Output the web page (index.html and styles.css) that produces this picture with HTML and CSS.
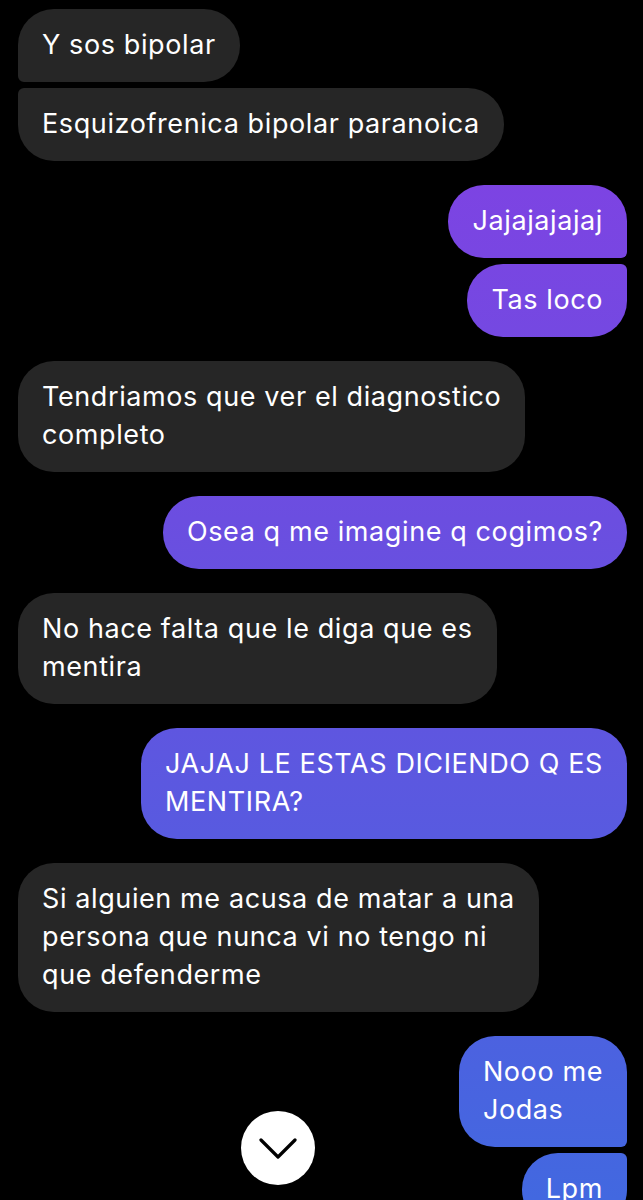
FILE: index.html
```html
<!DOCTYPE html>
<html lang="es">
<head>
  <meta charset="UTF-8">
  <title>Chat</title>
  <link rel="stylesheet" href="styles.css">
</head>
<body>

  <div class="thread">
    <div class="group them">
      <div class="bubble first">Y sos bipolar</div>
      <div class="bubble last">Esquizofrenica bipolar paranoica</div>
    </div>

    <div class="group me">
      <div class="bubble first">Jajajajajaj</div>
      <div class="bubble last">Tas loco</div>
    </div>

    <div class="group them">
      <div class="bubble">Tendriamos que ver el diagnostico<br>completo</div>
    </div>

    <div class="group me">
      <div class="bubble">Osea q me imagine q cogimos?</div>
    </div>

    <div class="group them">
      <div class="bubble">No hace falta que le diga que es<br>mentira</div>
    </div>

    <div class="group me">
      <div class="bubble">JAJAJ LE ESTAS DICIENDO Q ES<br>MENTIRA?</div>
    </div>

    <div class="group them">
      <div class="bubble">Si alguien me acusa de matar a una<br>persona que nunca vi no tengo ni<br>que defenderme</div>
    </div>

    <div class="group me">
      <div class="bubble first">Nooo me<br>Jodas</div>
      <div class="bubble last">Lpm</div>
    </div>
  </div>

  <button class="scroll-down" aria-label="Ir abajo">
    <svg width="38" height="22" viewBox="0 0 38 22">
      <polyline points="2,2 19,19 36,2" fill="none" stroke="#000" stroke-width="3.2" stroke-linecap="round" stroke-linejoin="round"/>
    </svg>
  </button>

</body>
</html>
```

FILE: styles.css
```css
html, body {
  margin: 0;
  padding: 0;
  background: #000;
}

body {
  font-family: Inter, "Noto Sans", sans-serif;
  color: #fff;
  height: 1200px;
  overflow: hidden;
  position: relative;
}

.thread {
  display: flex;
  flex-direction: column;
  gap: 24px;
  padding: 9px 16px 0 18px;
}

.group {
  display: flex;
  flex-direction: column;
  gap: 6px;
}

.group.them {
  align-items: flex-start;
}

.group.me {
  align-items: flex-end;
}

.bubble {
  font-size: 27px;
  line-height: 38px;
  padding: 17px 24px 18px;
  border-radius: 36px;
  letter-spacing: 0.6px;
}

.them .bubble {
  background: #262626;
}

.me .bubble {
  background: linear-gradient(180deg, #863ee4 0px, #6b4ee0 520px, #4268e0 1200px);
  background-attachment: fixed;
}

.them .bubble.first {
  border-bottom-left-radius: 6px;
}

.them .bubble.last {
  border-top-left-radius: 6px;
}

.me .bubble.first {
  border-bottom-right-radius: 6px;
}

.me .bubble.last {
  border-top-right-radius: 6px;
}

.scroll-down {
  position: absolute;
  left: 241px;
  top: 1111px;
  width: 74px;
  height: 74px;
  border-radius: 50%;
  border: none;
  background: #fff;
  display: flex;
  align-items: center;
  justify-content: center;
  padding: 0;
  padding-top: 2px;
}
```
